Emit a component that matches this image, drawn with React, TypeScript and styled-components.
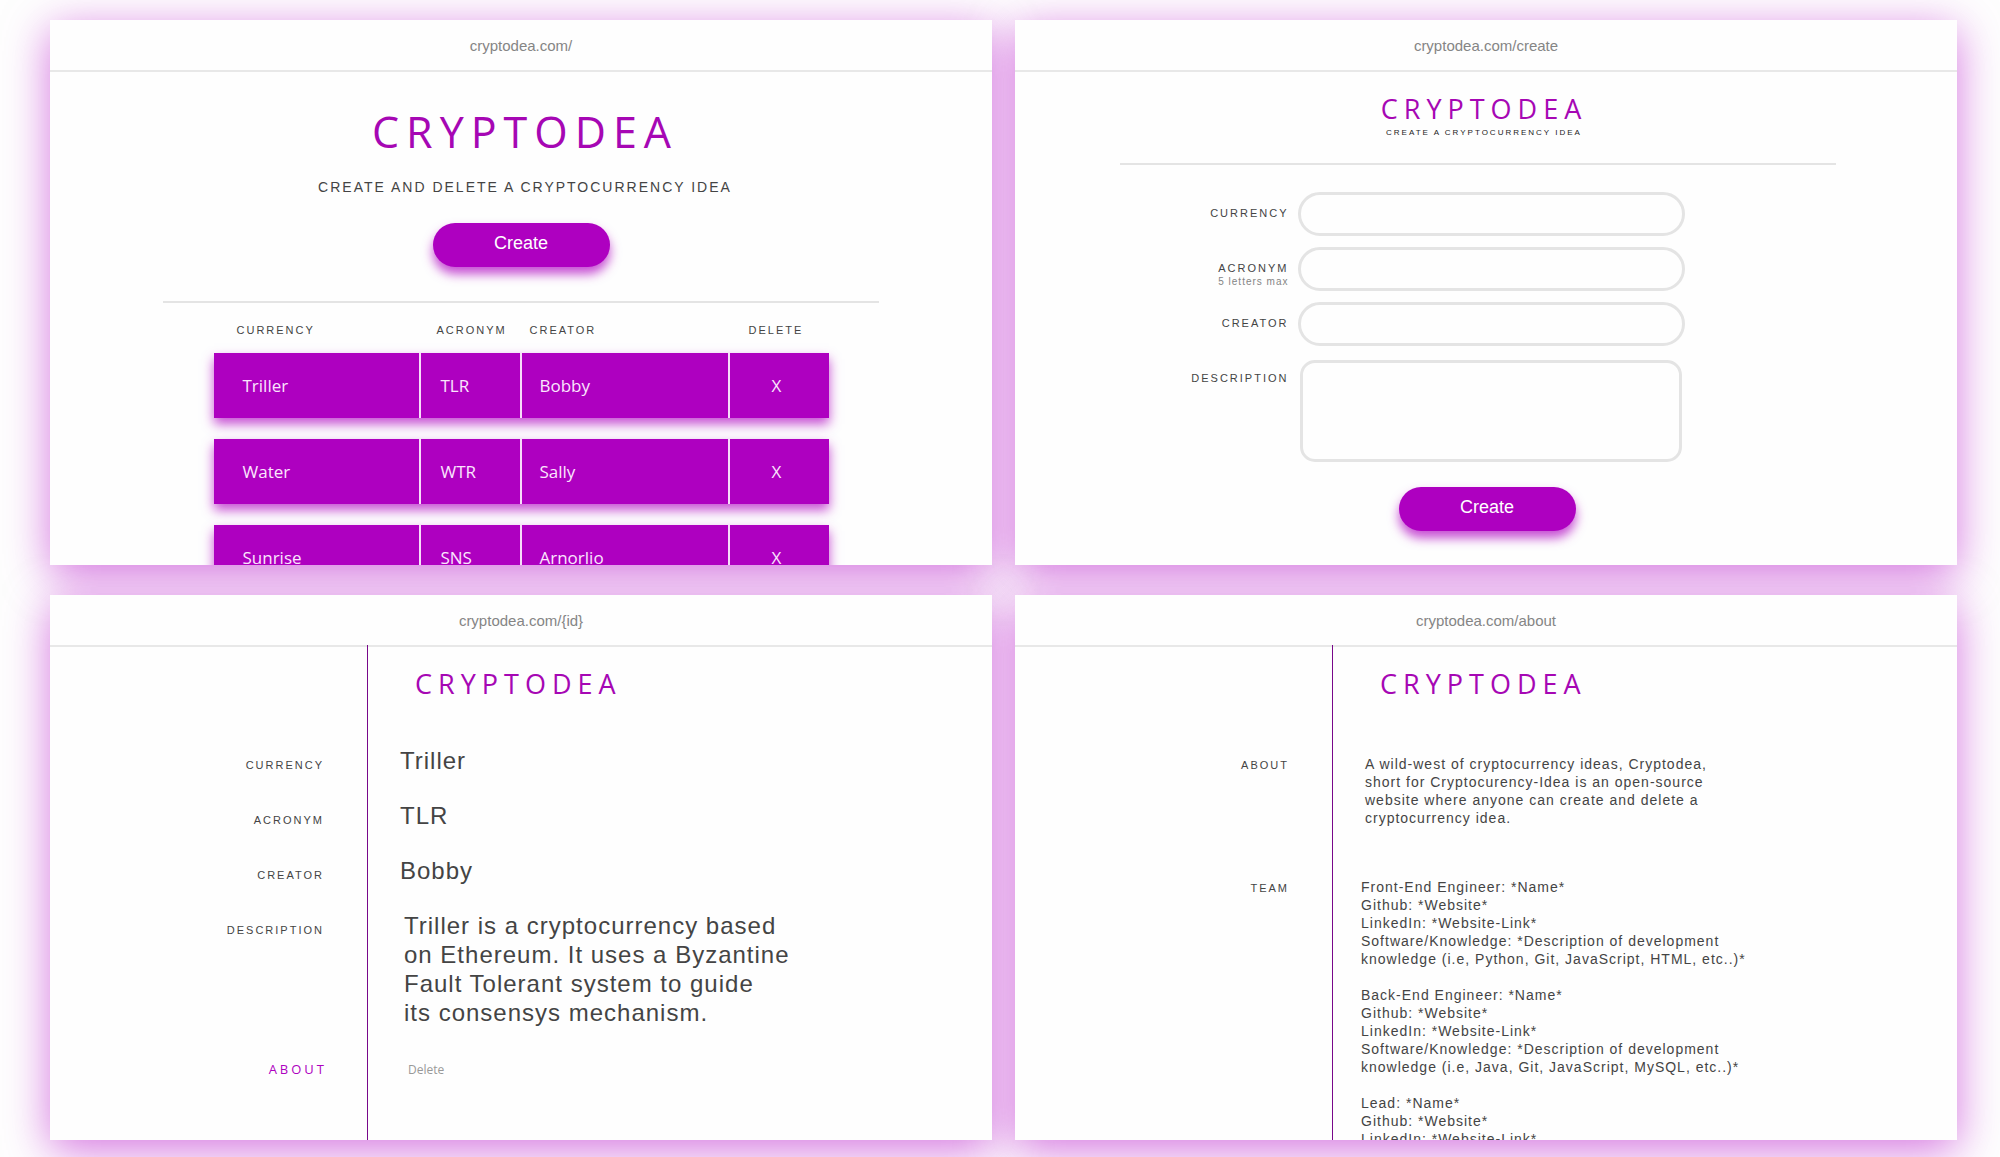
import React from "react";
import styled, { createGlobalStyle } from "styled-components";

const purple = "#ae00c0";
const ink = "#444";
const sans = `"Liberation Sans", Arial, sans-serif`;
const humanist = `"Open Sans", "Noto Sans", sans-serif`;

const GlobalStyle = createGlobalStyle`
  *, *::before, *::after { box-sizing: border-box; }
  body {
    margin: 0;
    background: #fefefe;
    color: ${ink};
    font-family: ${sans};
  }
  h1, p, dl, dt, dd { margin: 0; }
  button, input, textarea { font-family: inherit; }
`;

const Board = styled.div`
  display: grid;
  grid-template-columns: repeat(2, minmax(0, 1fr));
  gap: 30px 23px;
  padding: 20px 43px 17px 50px;
  isolation: isolate;
  overflow: hidden;
`;

/* The glow sits beneath every screen, so neighbours never tint each other. */
const Frame = styled.section`
  position: relative;
  display: grid;
  aspect-ratio: 942 / 545;

  &::before {
    content: "";
    position: absolute;
    inset: 0;
    z-index: -1;
    box-shadow: 0 10px 42px rgba(180, 0, 200, 0.54);
  }
`;

const Screen = styled.div`
  display: flex;
  flex-direction: column;
  min-height: 0;
  overflow: hidden;
  background: #fefefe;
`;

const AddressBar = styled.header`
  flex: none;
  display: flex;
  align-items: center;
  justify-content: center;
  height: 52px;
  padding-top: 2px;
  border-bottom: 2px solid #e8e8e8;
  color: #858585;
  font-size: 15px;
  line-height: 18px;
`;

const Logo = styled.h1<{ $large?: boolean }>`
  color: #a607b4;
  font-family: ${humanist};
  font-weight: 400;
  font-size: ${(p) => (p.$large ? 43 : 27)}px;
  line-height: ${(p) => (p.$large ? 60 : 36)}px;
  letter-spacing: ${(p) => (p.$large ? 7 : 6)}px;
`;

const Tagline = styled.p<{ $small?: boolean }>`
  color: ${(p) => (p.$small ? "#222" : ink)};
  font-size: ${(p) => (p.$small ? 8 : 14)}px;
  line-height: ${(p) => (p.$small ? 12 : 18)}px;
  letter-spacing: 2px;
`;

const Hero = styled.div`
  flex: none;
  display: flex;
  flex-direction: column;
  align-items: center;
  padding-top: 30px;
`;

const HeroText = styled.div`
  display: grid;
  justify-items: center;
  gap: 16px;
  padding-left: 8px;
  margin-bottom: 27px;
`;

const FormHead = styled.div`
  display: grid;
  justify-items: center;
  padding: 19px 4px 0 0;
`;

const Rule = styled.hr`
  flex: none;
  width: 76%;
  height: 2px;
  margin: 34px auto 0;
  border: 0;
  background: #e4e4e4;
`;

const FormRule = styled(Rule)`
  margin: 24px 0 0 105px;
`;

const PrimaryButton = styled.button`
  width: 177px;
  height: 44px;
  padding: 0 0 4px;
  border: 0;
  border-radius: 22px;
  background: ${purple};
  box-shadow: 0 7px 11px rgba(174, 0, 192, 0.7);
  color: #fff;
  font-size: 18px;
  line-height: 22px;
  cursor: pointer;
`;

const IdeaTable = styled.table`
  display: grid;
  gap: 16px;
  width: 615px;
  max-width: 100%;
  margin: 20px auto 0;

  thead, tbody { display: grid; gap: 21px; }
  tr {
    display: grid;
    grid-template-columns: 205px 101px 208px minmax(0, 1fr);
  }
`;

const HeadCell = styled.th<{ $pad: number }>`
  padding: 0 0 0 ${(p) => p.$pad}px;
  color: ${ink};
  font-size: 11px;
  font-weight: 400;
  line-height: 14px;
  letter-spacing: 2px;
  text-align: left;
`;

const IdeaRow = styled.tr`
  background: ${purple};
  box-shadow: 0 6px 11px rgba(174, 0, 192, 0.7);
`;

const IdeaCell = styled.td<{ $pad: number }>`
  padding: 21px 0 20px ${(p) => p.$pad}px;
  color: #fbe6fd;
  font-family: ${humanist};
  font-size: 17px;
  line-height: 24px;

  & + & { border-left: 2px solid #f6dcf9; }
`;

const RemoveButton = styled.button`
  display: block;
  padding: 0;
  border: 0;
  background: none;
  color: inherit;
  font: inherit;
  cursor: pointer;
`;

const IdeaForm = styled.form`
  display: grid;
  grid-template-columns: 1fr minmax(0, 387px) 1fr;
  gap: 11px 9px;
  padding: 27px 0 0 10px;
  justify-items: center;
`;

const FieldLabel = styled.label`
  grid-column: 1;
  justify-self: end;
  padding-top: 14px;
  font-size: 11px;
  line-height: 14px;
  letter-spacing: 2px;
  text-align: right;
`;

const Hint = styled.small`
  display: block;
  color: #858585;
  font-size: 10px;
  line-height: 14px;
  letter-spacing: 1px;
`;

const TextField = styled.input`
  grid-column: 2;
  width: 100%;
  height: 44px;
  padding: 0 18px;
  border: 3px solid #e4e4e4;
  border-radius: 22px;
  background: transparent;
  font-size: 15px;
`;

const TextBlock = styled.textarea`
  grid-column: 2;
  width: 382px;
  max-width: 100%;
  height: 102px;
  margin: 3px 0 14px;
  padding: 12px;
  border: 3px solid #e4e4e4;
  border-radius: 15px;
  background: transparent;
  font-size: 15px;
  resize: none;
`;

const FormAction = styled.div`
  grid-column: 1 / -1;
  padding-right: 8px;
`;

/* The divider line overlaps the address bar's border by its 2px. */
const Split = styled.div`
  flex: 1;
  display: grid;
  grid-template-columns: 317px minmax(0, 1fr);
  grid-template-rows: auto 1fr;
  min-height: 0;
  margin-top: -2px;
  padding-top: 2px;
  background: linear-gradient(#78088a, #78088a) 317px 0 / 1px 100% no-repeat;
`;

const SplitLogo = styled.div`
  grid-column: 2;
  padding: 19px 0 0 48px;
`;

const Details = styled.dl<{ $top: number; $rowGap: number; $columnGap: number }>`
  grid-column: 1 / -1;
  display: grid;
  grid-template-columns: 274px minmax(0, 1fr);
  gap: ${(p) => p.$rowGap}px ${(p) => p.$columnGap}px;
  align-items: baseline;
  align-content: start;
  padding-top: ${(p) => p.$top}px;
`;

const Term = styled.dt`
  text-align: right;
  font-size: 11px;
  line-height: 14px;
  letter-spacing: 2px;
`;

const Value = styled.dd<{ $indent?: boolean }>`
  padding-left: ${(p) => (p.$indent ? 4 : 0)}px;
  font-size: 24px;
  line-height: 29px;
  letter-spacing: 1px;
`;

const Prose = styled.dd<{ $indent?: boolean }>`
  display: grid;
  gap: 18px;
  padding-left: ${(p) => (p.$indent ? 4 : 0)}px;
  font-size: 14px;
  line-height: 18px;
  letter-spacing: 1px;
`;

/* Pulls the trailing letter gap out of the right-aligned edge. */
const AboutLink = styled.a`
  margin-right: -3px;
  color: ${purple};
  font-family: ${humanist};
  font-size: 13px;
  line-height: 32px;
  letter-spacing: 3px;
  text-decoration: none;
`;

const DeleteButton = styled.button`
  padding: 0 0 0 8px;
  border: 0;
  background: none;
  color: #999;
  font-size: 12px;
  line-height: 32px;
  cursor: pointer;

  && { font-family: ${humanist}; }
`;

const ideas = [
  { currency: "Triller", acronym: "TLR", creator: "Bobby" },
  { currency: "Water", acronym: "WTR", creator: "Sally" },
  { currency: "Sunrise", acronym: "SNS", creator: "Arnorlio" },
];

const team = [
  {
    role: "Front-End Engineer",
    knowledge: ["*Description of development", "knowledge (i.e, Python, Git, JavaScript, HTML, etc..)*"],
  },
  {
    role: "Back-End Engineer",
    knowledge: ["*Description of development", "knowledge (i.e, Java, Git, JavaScript, MySQL, etc..)*"],
  },
  { role: "Lead", knowledge: null },
];

function Page({ url, children }: { url: string; children: React.ReactNode }) {
  return (
    <Frame>
      <Screen>
        <AddressBar>{url}</AddressBar>
        {children}
      </Screen>
    </Frame>
  );
}

function HomePage() {
  return (
    <Page url="cryptodea.com/">
      <Hero>
        <HeroText>
          <Logo $large>CRYPTODEA</Logo>
          <Tagline>CREATE AND DELETE A CRYPTOCURRENCY IDEA</Tagline>
        </HeroText>
        <PrimaryButton type="button">Create</PrimaryButton>
      </Hero>
      <Rule />
      <IdeaTable>
        <thead>
          <tr>
            <HeadCell $pad={23}>CURRENCY</HeadCell>
            <HeadCell $pad={18}>ACRONYM</HeadCell>
            <HeadCell $pad={10}>CREATOR</HeadCell>
            <HeadCell $pad={21}>DELETE</HeadCell>
          </tr>
        </thead>
        <tbody>
          {ideas.map((idea) => (
            <IdeaRow key={idea.acronym}>
              <IdeaCell $pad={29}>{idea.currency}</IdeaCell>
              <IdeaCell $pad={20}>{idea.acronym}</IdeaCell>
              <IdeaCell $pad={18}>{idea.creator}</IdeaCell>
              <IdeaCell $pad={42}>
                <RemoveButton type="button">X</RemoveButton>
              </IdeaCell>
            </IdeaRow>
          ))}
        </tbody>
      </IdeaTable>
    </Page>
  );
}

function CreatePage() {
  return (
    <Page url="cryptodea.com/create">
      <FormHead>
        <Logo>CRYPTODEA</Logo>
        <Tagline $small>CREATE A CRYPTOCURRENCY IDEA</Tagline>
      </FormHead>
      <FormRule />
      <IdeaForm onSubmit={(event) => event.preventDefault()}>
        <FieldLabel htmlFor="currency">CURRENCY</FieldLabel>
        <TextField id="currency" />
        <FieldLabel htmlFor="acronym">
          ACRONYM
          <Hint>5 letters max</Hint>
        </FieldLabel>
        <TextField id="acronym" maxLength={5} />
        <FieldLabel htmlFor="creator">CREATOR</FieldLabel>
        <TextField id="creator" />
        <FieldLabel htmlFor="description">DESCRIPTION</FieldLabel>
        <TextBlock id="description" />
        <FormAction>
          <PrimaryButton type="submit">Create</PrimaryButton>
        </FormAction>
      </IdeaForm>
    </Page>
  );
}

function IdeaPage() {
  return (
    <Page url="cryptodea.com/{id}">
      <Split>
        <SplitLogo>
          <Logo>CRYPTODEA</Logo>
        </SplitLogo>
        <Details $top={44} $rowGap={26} $columnGap={76}>
          <Term>CURRENCY</Term>
          <Value>Triller</Value>
          <Term>ACRONYM</Term>
          <Value>TLR</Value>
          <Term>CREATOR</Term>
          <Value>Bobby</Value>
          <Term>DESCRIPTION</Term>
          <Value $indent>
            Triller is a cryptocurrency based
            <br />
            on Ethereum. It uses a Byzantine
            <br />
            Fault Tolerant system to guide
            <br />
            its consensys mechanism.
          </Value>
          <Term>
            <AboutLink href="#about">ABOUT</AboutLink>
          </Term>
          <dd>
            <DeleteButton type="button">Delete</DeleteButton>
          </dd>
        </Details>
      </Split>
    </Page>
  );
}

function AboutPage() {
  return (
    <Page url="cryptodea.com/about">
      <Split id="about">
        <SplitLogo>
          <Logo>CRYPTODEA</Logo>
        </SplitLogo>
        <Details $top={53} $rowGap={51} $columnGap={72}>
          <Term>ABOUT</Term>
          <Prose $indent>
            <p>
              A wild-west of cryptocurrency ideas, Cryptodea,
              <br />
              short for Cryptocurency-Idea is an open-source
              <br />
              website where anyone can create and delete a
              <br />
              cryptocurrency idea.
            </p>
          </Prose>
          <Term>TEAM</Term>
          <Prose>
            {team.map((member) => (
              <p key={member.role}>
                {member.role}: *Name*
                <br />
                Github: *Website*
                <br />
                LinkedIn: *Website-Link*
                {member.knowledge && (
                  <>
                    <br />
                    Software/Knowledge: {member.knowledge[0]}
                    <br />
                    {member.knowledge[1]}
                  </>
                )}
              </p>
            ))}
          </Prose>
        </Details>
      </Split>
    </Page>
  );
}

export default function App() {
  return (
    <>
      <GlobalStyle />
      <Board>
        <HomePage />
        <CreatePage />
        <IdeaPage />
        <AboutPage />
      </Board>
    </>
  );
}
